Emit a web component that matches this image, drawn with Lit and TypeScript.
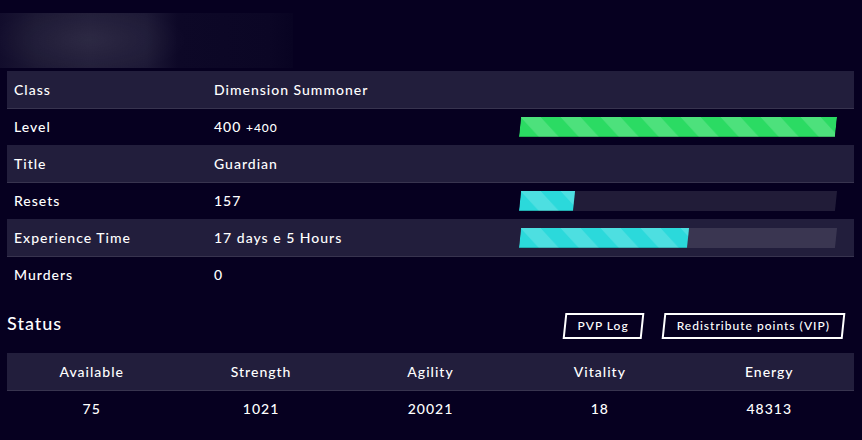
import { LitElement, html, css, nothing } from "lit";
import { customElement, property } from "lit/decorators.js";
import { classMap } from "lit/directives/class-map.js";

type Tone = "green" | "cyan";

interface Detail {
  label: string;
  value: string;
  extra?: string;
  bar?: { percent: number; tone: Tone };
}

const DETAILS: Detail[] = [
  { label: "Class", value: "Dimension Summoner" },
  { label: "Level", value: "400", extra: "+400", bar: { percent: 100, tone: "green" } },
  { label: "Title", value: "Guardian" },
  { label: "Resets", value: "157", bar: { percent: 17, tone: "cyan" } },
  { label: "Experience Time", value: "17 days e 5 Hours", bar: { percent: 53, tone: "cyan" } },
  { label: "Murders", value: "0" },
];

const STATS = [
  { name: "Available", value: 75 },
  { name: "Strength", value: 1021 },
  { name: "Agility", value: 20021 },
  { name: "Vitality", value: 18 },
  { name: "Energy", value: 48313 },
];

@customElement("progress-meter")
export class ProgressMeter extends LitElement {
  @property({ type: Number }) percent = 0;
  @property() tone: Tone = "green";
  @property() label = "";

  static styles = css`
    :host {
      display: block;
    }
    .track {
      height: 20px;
      transform: skewX(-6deg);
      background: rgba(255, 255, 255, 0.11);
      overflow: hidden;
    }
    .fill {
      height: 100%;
      box-shadow: inset 0 -1px 0 rgba(0, 0, 0, 0.2);
      background-image: linear-gradient(
        45deg,
        rgba(255, 255, 255, 0.16) 25%,
        transparent 25%,
        transparent 50%,
        rgba(255, 255, 255, 0.16) 50%,
        rgba(255, 255, 255, 0.16) 75%,
        transparent 75%
      );
      background-size: 40px 40px;
    }
    .green {
      background-color: #2bdb63;
    }
    .cyan {
      background-color: #2bd9db;
    }
  `;

  render() {
    return html`
      <div
        class="track"
        role="progressbar"
        aria-label=${this.label}
        aria-valuemin="0"
        aria-valuemax="100"
        aria-valuenow=${this.percent}
      >
        <div
          class=${classMap({ fill: true, [this.tone]: true })}
          style="width:${this.percent}%"
        ></div>
      </div>
    `;
  }
}

@customElement("app-root")
export class AppRoot extends LitElement {
  static styles = css`
    :host {
      display: block;
      box-sizing: border-box;
      min-height: 100vh;
      padding-top: 13px;
      background: #060020;
      color: #fff;
      font-family: Lato, "Liberation Sans", sans-serif;
      font-size: 14px;
      font-weight: 500;
      line-height: 20px;
      letter-spacing: 1px;
    }
    .banner {
      width: 34%;
      height: 55px;
      background:
        radial-gradient(ellipse 100px 34px at 88px 27px, rgba(255, 255, 255, 0.05), transparent),
        linear-gradient(
          90deg,
          #120d2c 0,
          #1c1834 36px,
          #211d39 90px,
          #1d1936 146px,
          #0d0827 178px,
          #0b0625 270px,
          #080322 100%
        );
    }
    .content {
      padding: 3px 8px 0 7px;
    }
    table {
      width: 100%;
      table-layout: fixed;
      border-collapse: separate;
      border-spacing: 0;
    }
    th,
    td {
      box-sizing: border-box;
      height: 36px;
      padding: 0 7px;
      font-weight: inherit;
      text-align: left;
    }
    .striped th,
    .striped td {
      height: 38px;
      background: #221e3c;
      border-bottom: 1px solid #38344f;
    }
    .label-col {
      width: 200px;
    }
    .value-col {
      width: 36%;
    }
    .bar-cell {
      padding: 0 18px 0 8px;
    }
    small {
      font-size: 12px;
    }
    .status {
      display: flex;
      align-items: flex-start;
      justify-content: space-between;
      padding: 14px 10px 14px 0;
    }
    h2 {
      margin: 0;
      font-size: 18px;
      line-height: 32px;
      font-weight: inherit;
    }
    .actions {
      display: flex;
      gap: 20px;
      padding-top: 6px;
    }
    button {
      position: relative;
      height: 26px;
      padding: 0 14px;
      border: 0;
      background: none;
      color: inherit;
      font: inherit;
      font-size: 12px;
      letter-spacing: inherit;
      cursor: pointer;
    }
    button::before {
      content: "";
      position: absolute;
      inset: 0;
      border: 2px solid #fff;
      transform: skewX(-6deg);
    }
    .stats th,
    .stats td {
      text-align: center;
    }
  `;

  render() {
    return html`
      <div class="banner"></div>
      <div class="content">
        <table>
          <colgroup>
            <col class="label-col" />
            <col class="value-col" />
            <col />
          </colgroup>
          <tbody>
            ${DETAILS.map(
              (d, i) => html`
                <tr class=${classMap({ striped: i % 2 === 0 })}>
                  <th scope="row">${d.label}</th>
                  <td>${d.value}${d.extra ? html` <small>${d.extra}</small>` : nothing}</td>
                  <td class="bar-cell">
                    ${d.bar
                      ? html`<progress-meter
                          .label=${d.label}
                          .percent=${d.bar.percent}
                          .tone=${d.bar.tone}
                        ></progress-meter>`
                      : nothing}
                  </td>
                </tr>
              `,
            )}
          </tbody>
        </table>
        <div class="status">
          <h2>Status</h2>
          <div class="actions">
            <button type="button">PVP Log</button>
            <button type="button">Redistribute points (VIP)</button>
          </div>
        </div>
        <table class="stats">
          <thead>
            <tr class="striped">
              ${STATS.map((s) => html`<th scope="col">${s.name}</th>`)}
            </tr>
          </thead>
          <tbody>
            <tr>
              ${STATS.map((s) => html`<td>${s.value}</td>`)}
            </tr>
          </tbody>
        </table>
      </div>
    `;
  }
}
